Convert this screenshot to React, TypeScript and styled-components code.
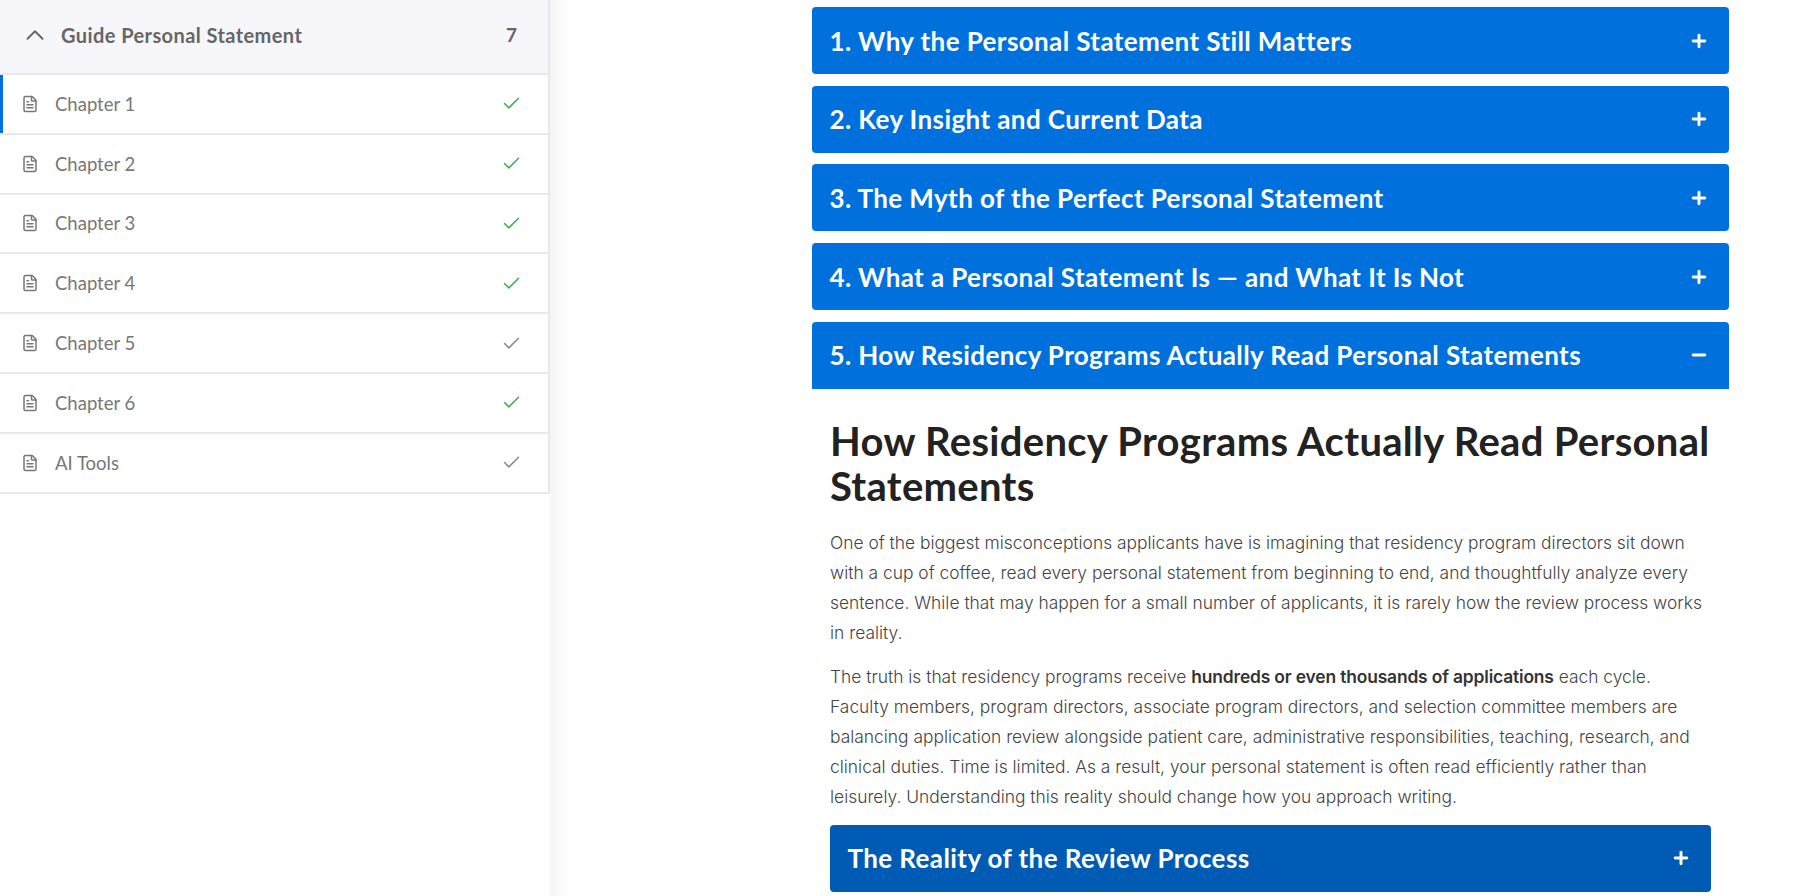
import { Check, ChevronUp, FileText, Minus, Plus } from 'lucide-react'
import { createGlobalStyle, styled } from 'styled-components'

const chapters = [
  { name: 'Chapter 1', done: true, active: true },
  { name: 'Chapter 2', done: true },
  { name: 'Chapter 3', done: true },
  { name: 'Chapter 4', done: true },
  { name: 'Chapter 5', done: false },
  { name: 'Chapter 6', done: true },
  { name: 'AI Tools', done: false },
]

const sections = [
  '1. Why the Personal Statement Still Matters',
  '2. Key Insight and Current Data',
  '3. The Myth of the Perfect Personal Statement',
  '4. What a Personal Statement Is — and What It Is Not',
]

const App = () => {
  return (
    <>
      <GlobalStyle />
      <Page>
        <Sidebar>
          <GuideHeader>
            <ChevronUp size={30} strokeWidth={1.5} />
            <GuideTitle>Guide Personal Statement</GuideTitle>
            <GuideCount>7</GuideCount>
          </GuideHeader>
          {chapters.map((chapter) => (
            <ChapterRow key={chapter.name} $active={chapter.active}>
              <FileText size={18} strokeWidth={2} />
              <ChapterName>{chapter.name}</ChapterName>
              <CheckMark $done={chapter.done}>
                <Check size={21} strokeWidth={1.7} />
              </CheckMark>
            </ChapterRow>
          ))}
        </Sidebar>
        <SideShadow />
        <Main>
          {sections.map((title) => (
            <AccordionBar key={title}>
              <BarTitle>{title}</BarTitle>
              <Plus size={20} strokeWidth={3.5} />
            </AccordionBar>
          ))}
          <AccordionBar $open>
            <BarTitle>5. How Residency Programs Actually Read Personal Statements</BarTitle>
            <Minus size={20} strokeWidth={3.5} />
          </AccordionBar>
          <Panel>
            <PanelHeading>How Residency Programs Actually Read Personal Statements</PanelHeading>
            <Paragraph>
              One of the biggest misconceptions applicants have is imagining that residency program
              directors sit down with a cup of coffee, read every personal statement from beginning
              to end, and thoughtfully analyze every sentence. While that may happen for a small
              number of applicants, it is rarely how the review process works in reality.
            </Paragraph>
            <Paragraph>
              The truth is that residency programs receive{' '}
              <strong>hundreds or even thousands of applications</strong> each cycle. Faculty
              members, program directors, associate program directors, and selection committee
              members are balancing application review alongside patient care, administrative
              responsibilities, teaching, research, and clinical duties. Time is limited. As a
              result, your personal statement is often read efficiently rather than leisurely.
              Understanding this reality should change how you approach writing.
            </Paragraph>
            <NestedBar>
              <BarTitle>The Reality of the Review Process</BarTitle>
              <Plus size={20} strokeWidth={3.5} />
            </NestedBar>
          </Panel>
        </Main>
      </Page>
    </>
  )
}

const GlobalStyle = createGlobalStyle`
  html, body {
    margin: 0;
    height: 100%;
    overflow: hidden;
    background: #fff;
    font-family: 'Lato', 'Liberation Sans', sans-serif;
    font-variant-ligatures: none;
  }
`

const Page = styled.div`
  display: flex;
  height: 896px;
  overflow: hidden;
`

const Sidebar = styled.aside`
  flex: none;
  width: 550px;
  box-sizing: border-box;
  align-self: flex-start;
  border-right: 2px solid #e8e8e8;
`

const SideShadow = styled.div`
  flex: none;
  width: 20px;
  background: linear-gradient(to right, #f5f5f5, #fff);
`

const GuideHeader = styled.div`
  display: flex;
  align-items: center;
  box-sizing: border-box;
  height: 75px;
  padding: 0 31px 4px 20px;
  background: #f6f6fb;
  border-bottom: 2px solid #e8e8e8;
  color: #666;
`

const GuideTitle = styled.div`
  flex: 1;
  margin-left: 11px;
  font-size: 20px;
  font-weight: 700;
  letter-spacing: 0.42px;
`

const GuideCount = styled.div`
  font-size: 19px;
  font-weight: 700;
`

const ChapterRow = styled.div<{ $active?: boolean }>`
  display: flex;
  align-items: center;
  box-sizing: border-box;
  height: 59.8px;
  padding: 0 26px 0 21px;
  border-bottom: 2px solid #e8e8e8;
  box-shadow: ${({ $active }) => ($active ? 'inset 3px 0 0 #0071dc' : 'none')};
  color: #777;
`

const ChapterName = styled.div`
  flex: 1;
  margin-left: 16px;
  font-size: 18.5px;
  font-weight: 400;
`

const CheckMark = styled.span<{ $done?: boolean }>`
  display: flex;
  color: ${({ $done }) => ($done ? '#3cae52' : '#888')};
`

const Main = styled.main`
  flex: none;
  display: flex;
  flex-direction: column;
  gap: 11.7px;
  box-sizing: border-box;
  width: 917px;
  margin-left: 242px;
  padding-top: 7px;
`

const AccordionBar = styled.div<{ $open?: boolean }>`
  flex: none;
  display: flex;
  align-items: center;
  justify-content: space-between;
  box-sizing: border-box;
  height: 67px;
  padding: 0 20px 0 17.5px;
  background: #0071dc;
  border-radius: ${({ $open }) => ($open ? '4px 4px 0 0' : '4px')};
  color: #fff;
`

const BarTitle = styled.div`
  font-size: 26px;
  font-weight: 700;
  letter-spacing: 0.4px;
`

const Panel = styled.div`
  margin-top: -11.7px;
  padding: 30px 18px 0;
`

const PanelHeading = styled.h2`
  margin: 0 0 19px;
  font-size: 40px;
  line-height: 45px;
  font-weight: 700;
  letter-spacing: 0.3px;
  color: #222;
`

const Paragraph = styled.p`
  margin: 0 0 14px;
  font-family: 'Inter', 'Liberation Sans', sans-serif;
  font-size: 17.4px;
  line-height: 30px;
  font-weight: 300;
  color: #444;

  &:last-of-type {
    margin-bottom: 13px;
  }

  strong {
    font-weight: 600;
    letter-spacing: -0.15px;
    color: #333;
  }
`

const NestedBar = styled(AccordionBar)`
  background: #005bb5;
  border-radius: 4px;
`

export default App
